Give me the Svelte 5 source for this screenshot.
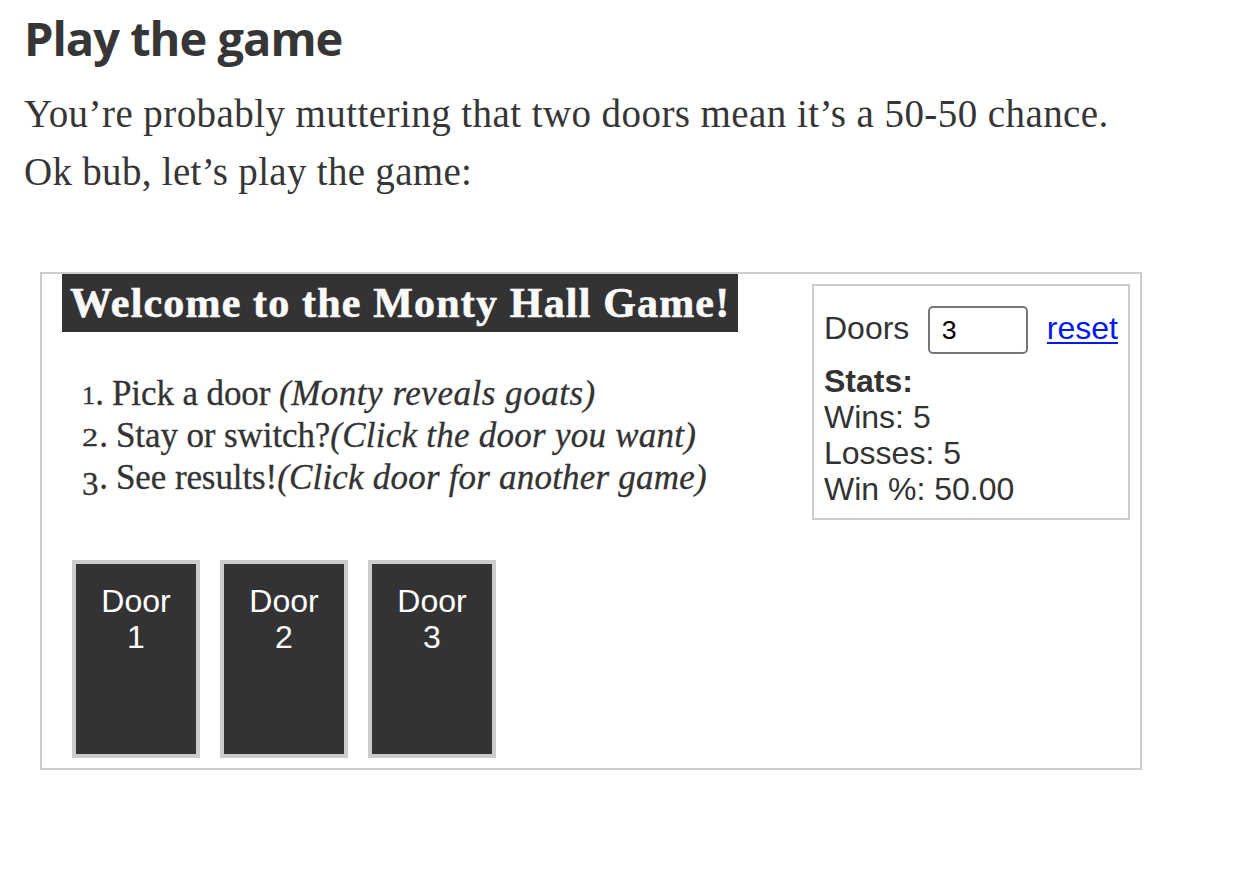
<script>
  let doorCount = $state(3);
  let wins = $state(5);
  let losses = $state(5);
  let percent = $derived(wins + losses ? ((100 * wins) / (wins + losses)).toFixed(2) : '0.00');
  let doors = $derived(Array.from({ length: Math.max(0, doorCount || 0) }, (_, i) => i + 1));

  const steps = [
    { num: '1', text: 'Pick a door ', hint: '(Monty reveals goats)' },
    { num: '2', text: 'Stay or switch?', hint: '(Click the door you want)' },
    { num: '3', text: 'See results!', hint: '(Click door for another game)' },
  ];

  function reset(event) {
    event.preventDefault();
    wins = 0;
    losses = 0;
  }
</script>

<main>
  <h2>Play the game</h2>
  <div class="intro">
    <div>You’re probably muttering that two doors mean it’s a 50-50 chance.</div>
    <div class="second">Ok bub, let’s play the game:</div>
  </div>

  <section class="game">
    <div class="left">
      <h3><span>Welcome to the Monty Hall Game!</span></h3>
      <div class="steps">
        {#each steps as step}
          <div class="step s{step.num}"><span class="num"><span class="digit">{step.num}</span>.</span><span class="text">{step.text}</span><em>{step.hint}</em></div>
        {/each}
      </div>
      <div class="doors">
        {#each doors as door}
          <div class="door">Door<br />{door}</div>
        {/each}
      </div>
    </div>

    <aside>
      <div class="controls">
        <label for="doors">Doors</label>
        <input id="doors" type="text" bind:value={doorCount} />
        <a href="#reset" onclick={reset}>reset</a>
      </div>
      <strong>Stats:</strong>
      <div>Wins: {wins}</div>
      <div>Losses: {losses}</div>
      <div>Win %: {percent}</div>
    </aside>
  </section>
</main>

<style>
  :global(body) {
    background: #fff;
  }
  main {
    box-sizing: border-box;
    width: 1260px;
    height: 892px;
    padding: 6px 24px 0;
    overflow: hidden;
    color: #363636;
    white-space: nowrap;
  }
  h2 {
    margin: 0;
    font: 700 47px/64px 'Open Sans', sans-serif;
    letter-spacing: -1px;
  }
  .intro {
    margin-top: 15px;
    font: 39px/58px 'Liberation Serif', serif;
    letter-spacing: 0.43px;
  }
  .second {
    letter-spacing: 0.3px;
  }
  .game {
    box-sizing: border-box;
    display: flex;
    justify-content: space-between;
    align-items: flex-start;
    width: 1102px;
    height: 498px;
    margin: 71px 0 0 16px;
    padding: 0 10px 0 20px;
    border: 2px solid #ccc;
    color: #333;
  }
  h3 {
    box-sizing: border-box;
    width: 676px;
    height: 58px;
    margin: 0;
    padding-left: 8px;
    background: #333;
    color: #fafafa;
    font: 700 42px/58px 'Liberation Serif', serif;
    letter-spacing: 1.17px;
    -webkit-text-stroke: 0.6px #fafafa;
  }
  .steps {
    margin: 41px 0 0 20px;
    font: 35px/42px 'Liberation Serif', serif;
    -webkit-text-stroke: 0.3px #333;
  }
  .step {
    display: flex;
    height: 42px;
    white-space: pre;
  }
  .num {
    display: flex;
    justify-content: space-between;
    width: 26px;
    margin-right: 8px;
  }
  .s1 .num {
    width: 22px;
  }
  .digit {
    font-size: 26px;
    line-height: 46px;
  }
  .s2 .digit {
    transform: scaleX(1.25);
    transform-origin: left;
  }
  .s3 .digit {
    font-size: 33px;
    line-height: 54px;
  }
  .text {
    letter-spacing: -0.1px;
  }
  .s1 em {
    letter-spacing: 0.52px;
  }
  .s2 em {
    letter-spacing: 0.25px;
  }
  .s3 em {
    letter-spacing: 0.2px;
  }
  .doors {
    display: flex;
    gap: 20px;
    margin: 61px 0 0 10px;
  }
  .door {
    box-sizing: border-box;
    width: 128px;
    height: 198px;
    padding-top: 19px;
    border: 4px solid #ccc;
    background: #333;
    color: #fff;
    font: 32px/36px 'Liberation Sans', Arial, sans-serif;
    text-align: center;
    cursor: pointer;
  }
  aside {
    box-sizing: border-box;
    width: 318px;
    height: 236px;
    margin-top: 10px;
    padding: 10px;
    border: 2px solid #ccc;
    font: 32px/36px 'Liberation Sans', Arial, sans-serif;
  }
  .controls {
    display: flex;
    align-items: center;
    height: 67px;
  }
  label {
    width: 104px;
    padding-bottom: 4px;
  }
  input {
    box-sizing: border-box;
    width: 100px;
    height: 48px;
    margin: 0 19px 0 0;
    padding: 3px 12px 1px;
    border: 2px solid #767676;
    border-radius: 5px;
    background: #fff;
    color: #000;
    font: 26.67px 'Liberation Sans', Arial, sans-serif;
  }
  a {
    padding-bottom: 4px;
    color: #0019ee;
    text-decoration-thickness: 2px;
    text-underline-offset: 3px;
    text-decoration-skip-ink: none;
  }
  strong {
    display: block;
  }
</style>
